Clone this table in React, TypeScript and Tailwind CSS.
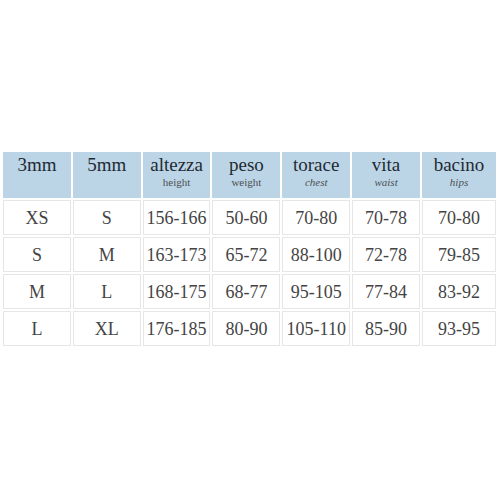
const head = [
  { main: "3mm" },
  { main: "5mm" },
  { main: "altezza", sub: "height" },
  { main: "peso", sub: "weight" },
  { main: "torace", sub: "chest", italic: true },
  { main: "vita", sub: "waist", italic: true },
  { main: "bacino", sub: "hips", italic: true },
];

const rows = [
  ["XS", "S", "156-166", "50-60", "70-80", "70-78", "70-80"],
  ["S", "M", "163-173", "65-72", "88-100", "72-78", "79-85"],
  ["M", "L", "168-175", "68-77", "95-105", "77-84", "83-92"],
  ["L", "XL", "176-185", "80-90", "105-110", "85-90", "93-95"],
];

export default function App() {
  return (
    <div className="w-[500px] h-[500px] bg-white pt-[150px] pl-[1px] font-[family-name:Liberation_Serif,serif]">
      <table className="w-[497px] border-separate border-spacing-[2px] table-fixed font-[family-name:Liberation_Serif,serif]">
        <thead>
          <tr>
            {head.map((h, i) => (
              <th
                key={h.main}
                className={
                  i === 6
                    ? "w-[74px] h-[46px] bg-[#bcd5e6] align-top pt-[2px] font-normal text-center"
                    : "h-[46px] bg-[#bcd5e6] align-top pt-[2px] font-normal text-center"
                }
              >
                <div className="text-[19px] leading-[22px] text-[#1f2a33]">{h.main}</div>
                {h.sub && (
                  <div
                    className={
                      h.italic
                        ? "text-[11px] leading-[12px] italic text-[#4a4f55]"
                        : "text-[11px] leading-[12px] text-[#4a4f55]"
                    }
                  >
                    {h.sub}
                  </div>
                )}
              </th>
            ))}
          </tr>
        </thead>
        <tbody>
          {rows.map((r) => (
            <tr key={r[0] + r[1]}>
              {r.map((c, i) => (
                <td
                  key={i}
                  className="h-[35px] border border-[#e6e6e6] text-center text-[18px] text-[#444] leading-none"
                >
                  {c}
                </td>
              ))}
            </tr>
          ))}
        </tbody>
      </table>
    </div>
  );
}
